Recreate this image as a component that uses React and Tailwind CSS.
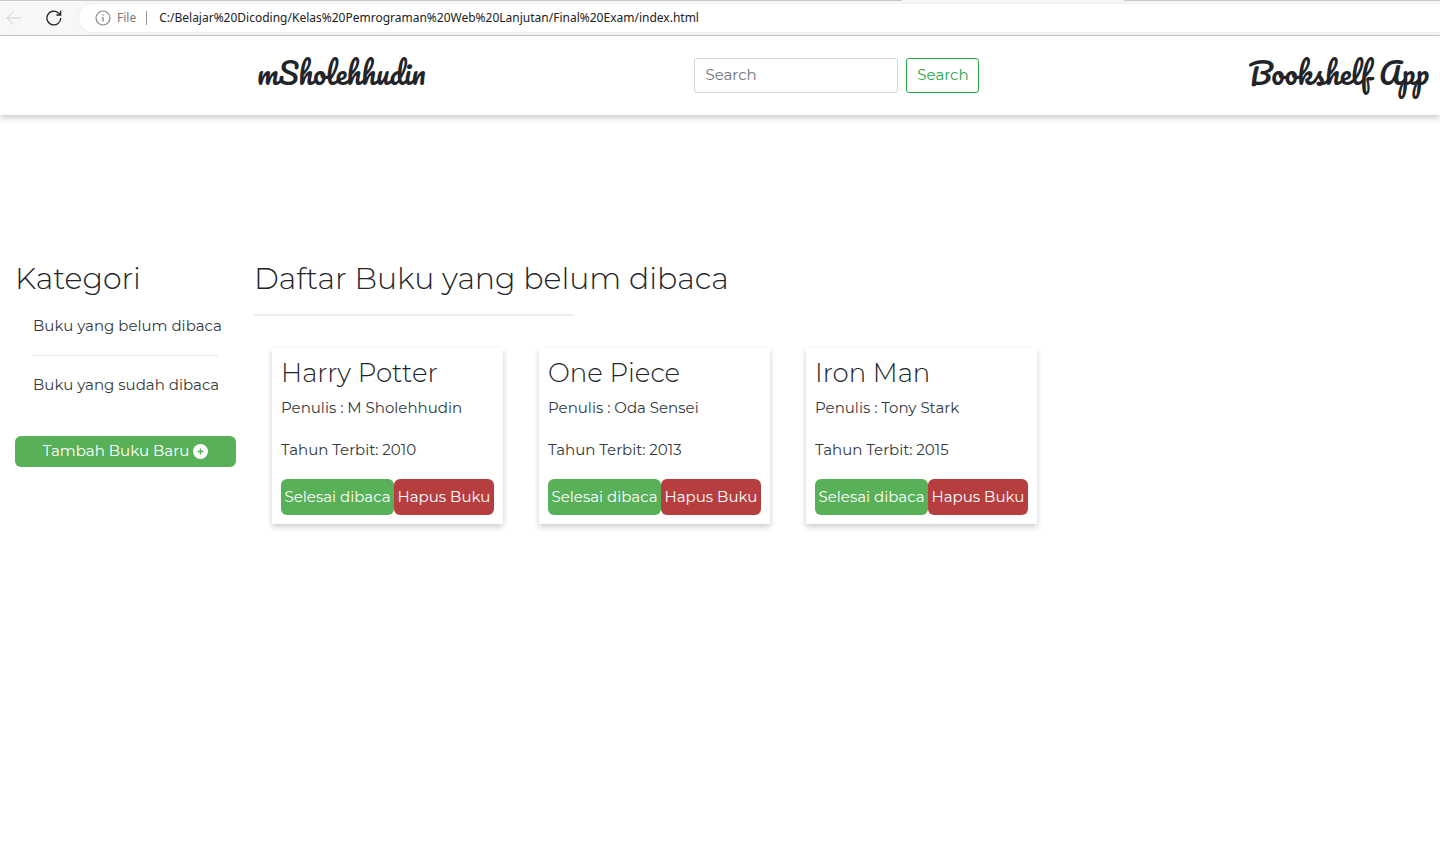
import React from "react";

const books = [
  { title: "Harry Potter", author: "M Sholehhudin", year: 2010 },
  { title: "One Piece", author: "Oda Sensei", year: 2013 },
  { title: "Iron Man", author: "Tony Stark", year: 2015 },
];

function BrowserBar() {
  return (
    <div className="flex flex-col border-b border-[#c8c8c8] bg-[#f7f7f7] font-['Segoe_UI','Noto_Sans',sans-serif]">
      <div className="flex h-px">
        <div className="w-[902px] bg-[#c8c8c8]" />
        <div className="w-[222px]" />
        <div className="flex-1 bg-[#c8c8c8]" />
      </div>
      <div className="flex items-center pt-[3px] pb-[3px]">
        <button type="button" aria-label="Back" className="ml-1.5 text-[#cfcfcf]">
          <svg width="16" height="16" viewBox="0 0 16 16" fill="none" stroke="currentColor">
            <path d="M15 8H1M7.500 1.500L1 8l6.500 6.500" />
          </svg>
        </button>
        <button type="button" aria-label="Reload" className="ml-6 text-[#222]">
          <svg width="16" height="16" viewBox="0 0 16 16" fill="none" stroke="currentColor" strokeWidth="1.300">
            <path d="M14.700 8A6.900 6.900 0 1 1 12.400 2.900L14.400 4.800M14.600 0.800v4.200H10.400" />
          </svg>
        </button>
        <div className="ml-[17px] flex h-7 flex-1 items-center rounded-l-full bg-white pl-4 text-xs shadow-[0_0_3px_#e2e2e2]">
          <svg width="16" height="16" viewBox="0 0 16 16" fill="none" stroke="#8a8a8a" strokeWidth="1.200">
            <circle cx="8" cy="8" r="7" />
            <path d="M8 7v4.500M8 4.200v1.300" strokeWidth="1.400" />
          </svg>
          <span className="ml-1.5 text-[#777]">File</span>
          <span className="ml-2.5 h-3.5 w-px bg-[#999]" />
          <span className="ml-3 text-[#222]">
            C:/Belajar%20Dicoding/Kelas%20Pemrograman%20Web%20Lanjutan/Final%20Exam/index.html
          </span>
        </div>
      </div>
    </div>
  );
}

function Header() {
  return (
    <header className="flex items-start justify-between pt-[22px] pr-[11px] pb-[22px] pl-[257px] shadow-[0_3px_6px_rgba(0,0,0,0.2)]">
      <h1 className="font-['Pacifico','Lato',cursive] text-[29px] leading-[30px] font-normal">mSholehhudin</h1>
      <form className="flex gap-2" onSubmit={(e) => e.preventDefault()}>
        <input
          type="search"
          aria-label="Search"
          placeholder="Search"
          className="h-[35px] w-[204px] rounded-[3px] border border-[#ced4da] px-2.5 pb-0.5 placeholder:text-[#6c757d]"
        />
        <button type="submit" className="h-[35px] w-[73px] rounded-[3px] border border-[#28a745] text-[#28a745]">
          Search
        </button>
      </form>
      <h2 className="font-['Pacifico','Lato',cursive] text-[29px] leading-[30px] font-normal">Bookshelf App</h2>
    </header>
  );
}

function Sidebar() {
  return (
    <aside className="w-[221px] shrink-0">
      <h2 className="text-[30px] leading-9 font-light">Kategori</h2>
      <nav className="mx-[18px] mt-[17px] text-[#343a40]">
        <a href="#belum" className="block leading-6 whitespace-nowrap">Buku yang belum dibaca</a>
        <hr className="my-[17px] border-[#e5e5e5]" />
        <a href="#sudah" className="block leading-6 whitespace-nowrap">Buku yang sudah dibaca</a>
      </nav>
      <button
        type="button"
        className="mt-[39px] flex h-[31px] w-full items-center justify-center gap-1 rounded-md bg-[#58b158] text-white"
      >
        Tambah Buku Baru
        <svg width="15" height="15" viewBox="0 0 15 15">
          <circle cx="7.500" cy="7.500" r="7.500" fill="currentColor" />
          <path d="M7.500 4.500v6M4.500 7.500h6" stroke="#58b158" strokeWidth="1.400" />
        </svg>
      </button>
    </aside>
  );
}

function BookCard({ title, author, year }) {
  return (
    <article className="w-[231px] bg-white p-[9px] shadow-[0_3px_6px_rgba(0,0,0,0.2)]">
      <h3 className="text-[26px] leading-8 font-light">{title}</h3>
      <p className="mt-[7px] leading-6 text-[#343a40]">Penulis : {author}</p>
      <p className="mt-[18px] leading-6 text-[#343a40]">Tahun Terbit: {year}</p>
      <div className="mt-[17px] flex text-white">
        <button type="button" className="h-9 w-[113px] rounded-md bg-[#58b158] whitespace-nowrap">
          Selesai dibaca
        </button>
        <button type="button" className="h-9 flex-1 rounded-md bg-[#b73e3f] whitespace-nowrap">
          Hapus Buku
        </button>
      </div>
    </article>
  );
}

export default function App() {
  return (
    <div className="min-h-screen bg-white font-['Montserrat','Inter',sans-serif] text-[15px] text-[#212529]">
      <BrowserBar />
      <Header />
      <main className="flex gap-[18px] px-[15px] pt-[146px]">
        <Sidebar />
        <section className="flex-1">
          <h2 className="text-[30px] leading-9 font-light">Daftar Buku yang belum dibaca</h2>
          <hr className="mt-[17px] w-80 border-t-2 border-[#ededed]" />
          <div className="mt-8 ml-[18px] flex flex-wrap gap-9">
            {books.map((book) => (
              <BookCard key={book.title} {...book} />
            ))}
          </div>
        </section>
      </main>
    </div>
  );
}
